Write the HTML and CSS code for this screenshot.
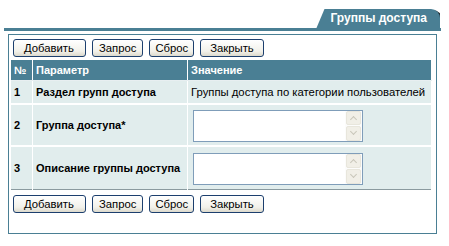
FILE: index.html
```html
<!DOCTYPE html>
<html>
<head>
	<meta charset="UTF-8">
	<link rel="stylesheet" href="styles.css">
</head>
<body>
	<div class="tabs">
		<div class="tab">Группы доступа</div>
	</div>
	<div class="panel">
		<div class="buttons">
			<button class="wide">Добавить</button>
			<button>Запрос</button>
			<button class="narrow">Сброс</button>
			<button class="close">Закрыть</button>
		</div>

		<table class="grid">
			<tr>
				<th class="num">№</th>
				<th class="param">Параметр</th>
				<th>Значение</th>
			</tr>
			<tr class="short">
				<td class="num">1</td>
				<td class="param">Раздел групп доступа</td>
				<td>Группы доступа по категории пользователей</td>
			</tr>
			<tr>
				<td class="num">2</td>
				<td class="param">Группа доступа*</td>
				<td>
					<div class="memo">
						<textarea></textarea>
						<div class="scroll"><span class="up"></span><span class="down"></span></div>
					</div>
				</td>
			</tr>
			<tr>
				<td class="num">3</td>
				<td class="param">Описание группы доступа</td>
				<td>
					<div class="memo">
						<textarea></textarea>
						<div class="scroll"><span class="up"></span><span class="down"></span></div>
					</div>
				</td>
			</tr>
		</table>

		<div class="buttons bottom">
			<button class="wide">Добавить</button>
			<button>Запрос</button>
			<button class="narrow">Сброс</button>
			<button class="close">Закрыть</button>
		</div>
	</div>
</body>
</html>
```

FILE: styles.css
```css
body {
	margin: 0;
	padding: 9px 8px 0 4px;
	font-family: "Liberation Sans", Arial, sans-serif;
	font-size: 11.3px;
	background: white;
}

.tabs {
	display: flex;
	justify-content: flex-end;
	border-bottom: 3px solid #4a7f94;
}

.tab {
	background: #4a7f94;
	color: white;
	font-weight: bold;
	font-size: 12px;
	height: 19px;
	line-height: 19px;
	padding: 0 13px 0 14px;
	margin-right: 1px;
	clip-path: polygon(8px 0, 100% 0, 100% 100%, 0 100%);
	border-top-right-radius: 9px;
	box-shadow: 2px 1px 0 #1d2a30;
}

.panel {
	margin: 3px 4px 0 4px;
	border: 1px solid #4a7f94;
	height: 198px;
	padding: 0 5px 0 2px;
}

.buttons {
	display: flex;
	gap: 6px;
	padding: 4px 0 3px 2px;
}

.buttons.bottom {
	padding-top: 5px;
}

button {
	font-family: "Liberation Sans", Arial, sans-serif;
	font-size: 11.3px;
	height: 18px;
	padding: 0 6px;
	border: 1px solid #1c3f6e;
	border-radius: 3px;
	background: linear-gradient(#ffffff, #f2f1ea 70%, #dcd9cc);
	color: black;
}

button.wide {
	padding: 0 11px 0 10px;
}

button.narrow {
	padding: 0 5px;
}

button.close {
	padding: 0 9px;
}

.grid {
	width: 421px;
	border-collapse: collapse;
	border-right: 1px solid #8a9a9f;
	border-bottom: 1px solid #8a9a9f;
}

.grid th, .grid td {
	border: 1px solid white;
	border-top: 0;
	text-align: left;
	padding: 0 3px;
}

.grid th {
	background: #4a7f94;
	color: white;
	font-weight: bold;
	font-size: 11px;
	height: 20px;
	border-left-color: #d9e6ea;
	border-bottom: 1px solid #e8eff1;
}

.grid td {
	background: #e1eded;
	height: 40px;
	border-bottom: 2px solid white;
}

.grid tr.short td {
	height: 22px;
}

.grid tr:last-child td {
	border-bottom: 0;
	height: 42px;
}

.grid .num {
	width: 15px;
	font-weight: bold;
	font-size: 11px;
}

.grid .param {
	width: 148px;
	font-weight: bold;
	font-size: 11px;
}

.grid th:first-child, .grid td:first-child {
	border-left: 0;
}

.memo {
	display: flex;
	width: 170px;
	height: 32px;
	margin: 1px 0 0 2px;
	box-sizing: border-box;
	border: 1px solid #7f9db9;
	background: white;
}

textarea {
	flex: 1;
	border: 0;
	resize: none;
	outline: none;
	margin: 0;
	padding: 2px;
	font-family: "Liberation Sans", Arial, sans-serif;
	font-size: 11px;
}

.scroll {
	width: 17px;
	display: flex;
	flex-direction: column;
	gap: 1px;
	background: #fcfcfb;
}

.scroll span {
	flex: 1;
	margin: 0 1px;
	border: 1px solid #e8e6dc;
	border-radius: 2px;
	background: #f1efe7;
	position: relative;
}

.scroll span::after {
	content: "";
	position: absolute;
	left: 4px;
	width: 4px;
	height: 4px;
	border-left: 1px solid #c9c7ba;
	border-top: 1px solid #c9c7ba;
}

.scroll .up::after {
	top: 5px;
	transform: rotate(45deg);
}

.scroll .down::after {
	top: 2px;
	transform: rotate(-135deg);
}
```
